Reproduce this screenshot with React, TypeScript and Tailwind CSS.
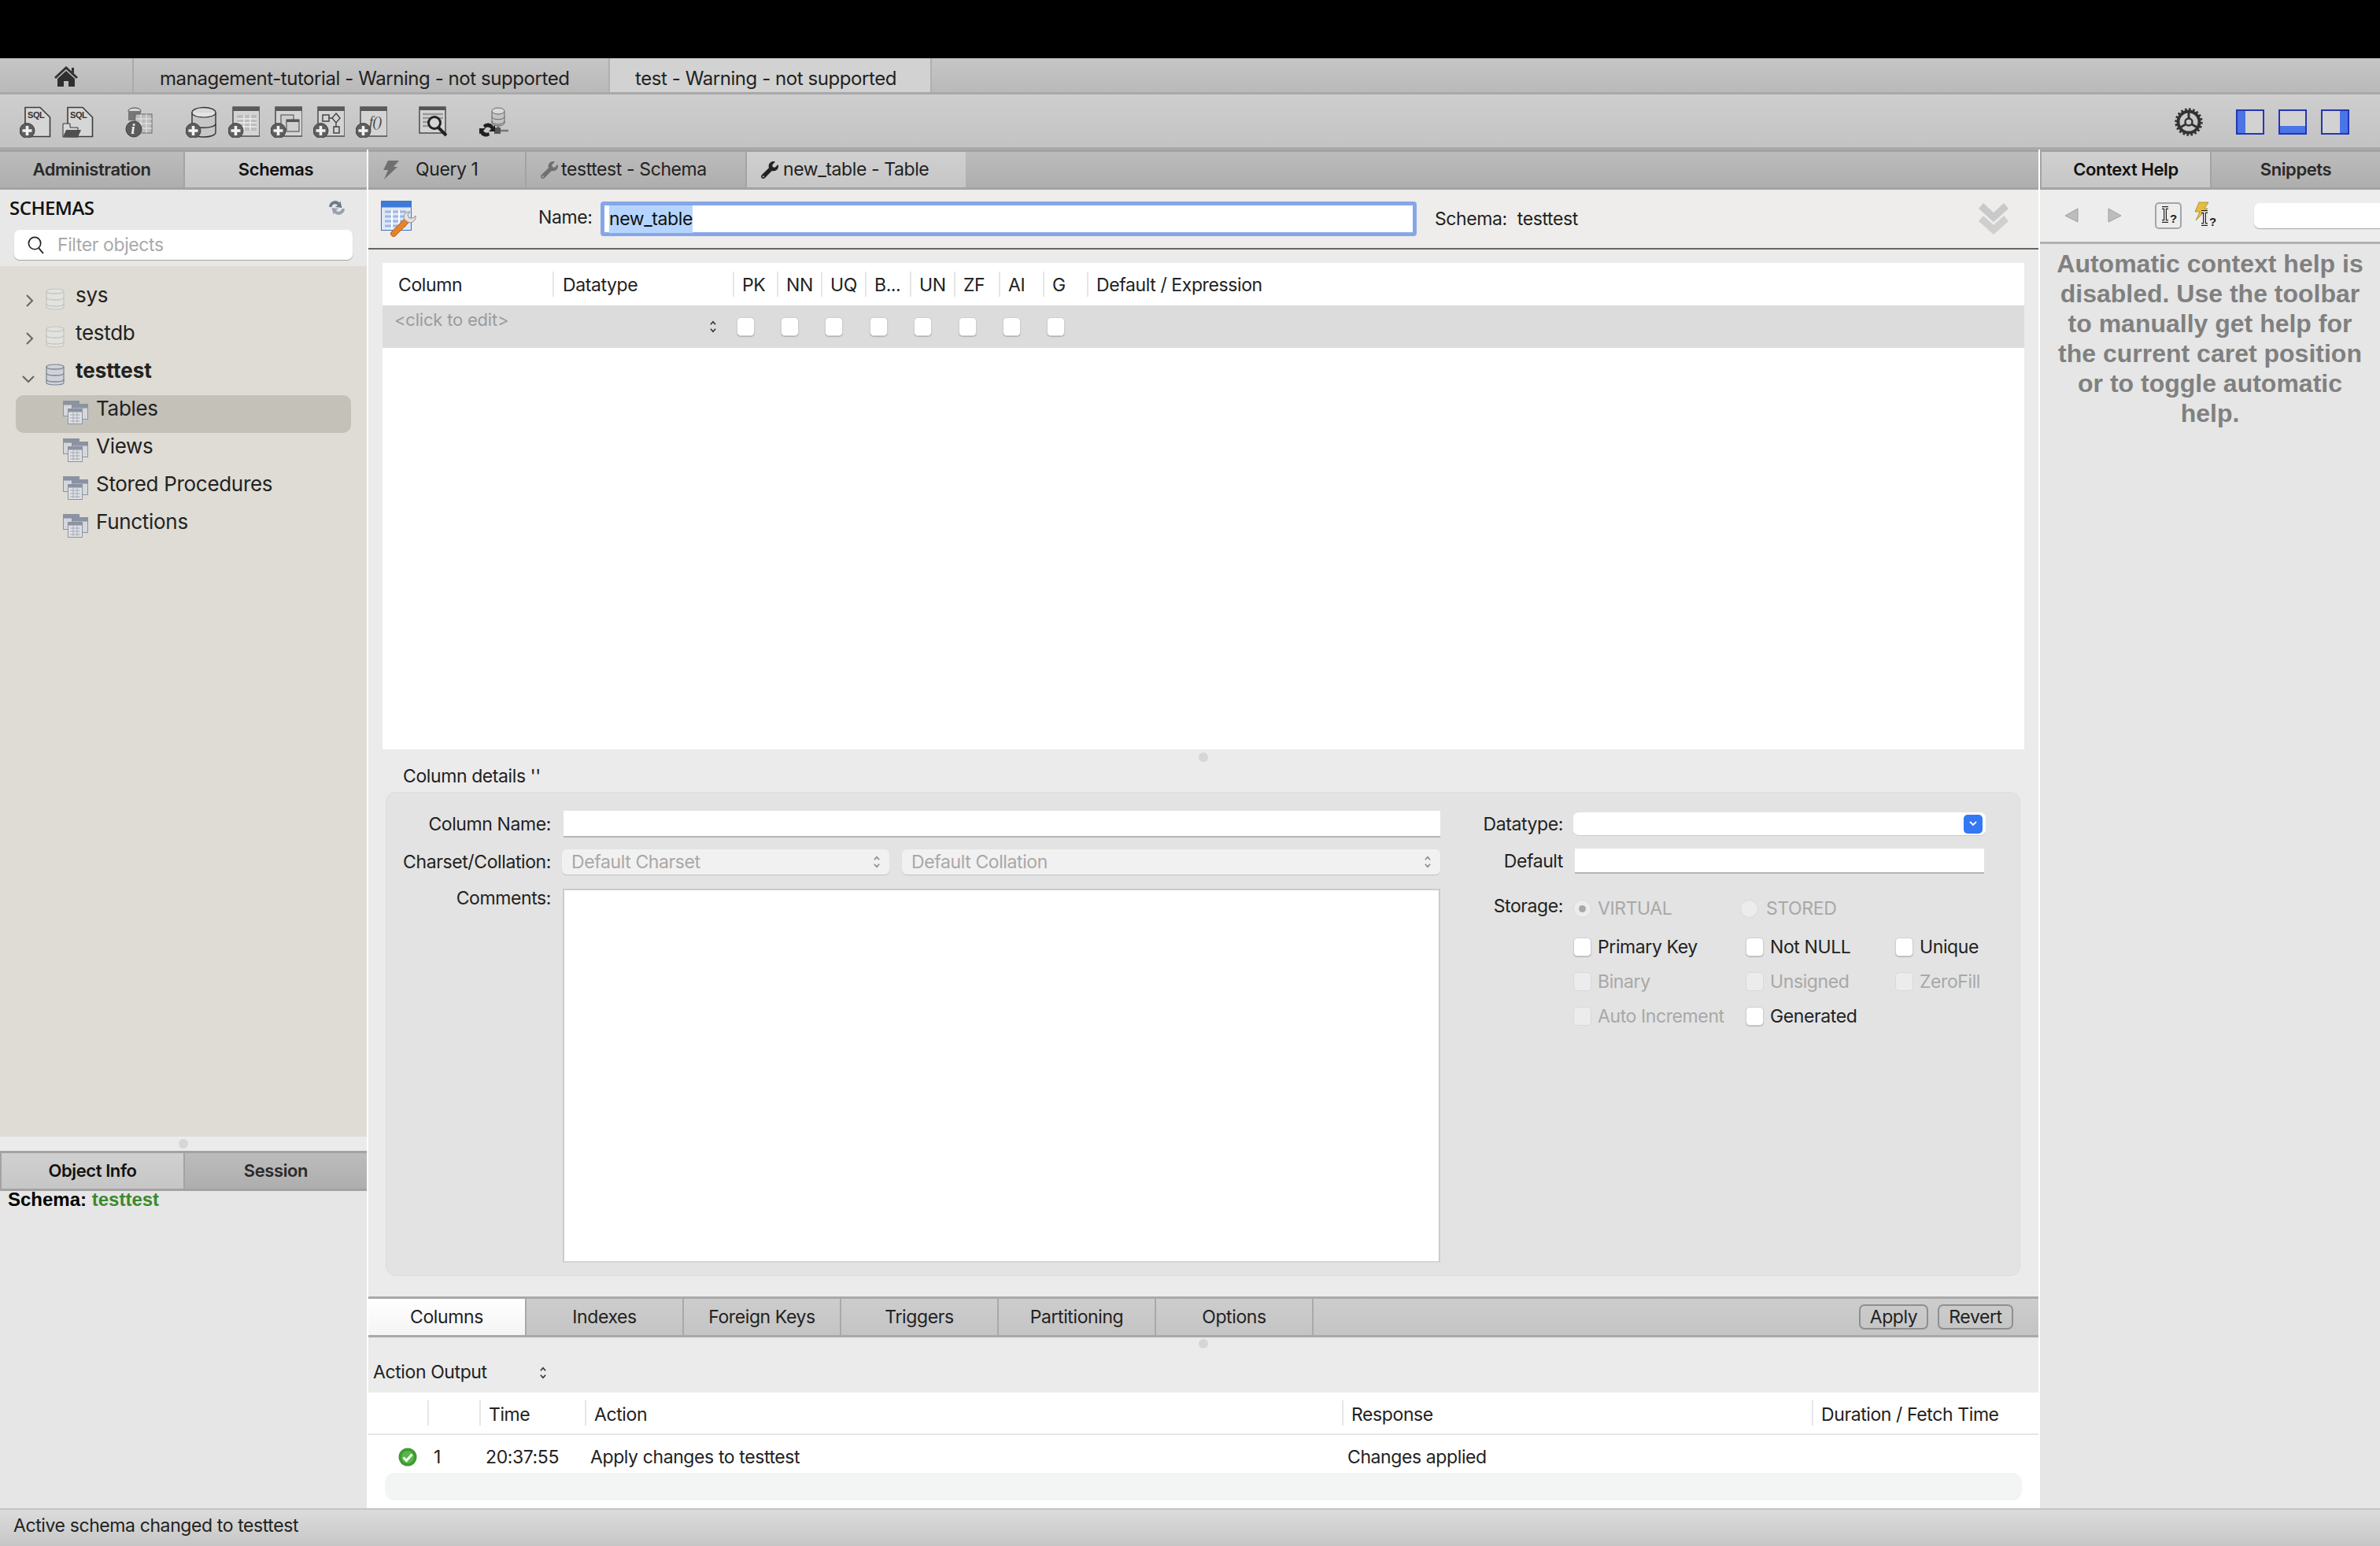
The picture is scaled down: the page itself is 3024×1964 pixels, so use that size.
import React from "react";
import { FaWrench } from "react-icons/fa";

const Badge = () => (
  <g>
    <circle cx="9.5" cy="31" r="9.5" fill="#5e5e5e" stroke="#3f3f3f" />
    <path d="M9.5 25v12M3.5 31h12" stroke="#f2f2f2" strokeWidth="3.6" />
  </g>
);
const Tool = ({ children, w = 40 }: { children: React.ReactNode; w?: number }) => (
  <svg viewBox={`0 0 ${w} 40`} width={w} height={40} className="shrink-0">{children}</svg>
);
const Doc = () => (
  <path d="M7 1.5H26L38.5 14V38.5H7Z" fill="#d6d6d6" stroke="#3d3d3d" strokeWidth="1.6" />
);
const WinFrame = () => (
  <g>
    <rect x="6" y="1" width="34" height="37" fill="#d4d4d4" stroke="#444" strokeWidth="1.4" />
    <rect x="6" y="1" width="34" height="5" fill="#5a5a5a" />
  </g>
);

const Home = () => (
  <svg viewBox="0 0 30 26" width={30} height={26}>
    <path d="M15 0 30 14l-2 2L15 4 2 16l-2-2L15 0Z" fill="#333" />
    <path d="M22 2h3v8l-3-3Z" fill="#333" />
    <path d="M15 6 26 16v10h-8v-7h-6v7H4V16Z" fill="#2f2f2f" />
  </svg>
);

const Bolt = ({ color }: { color: string }) => (
  <svg viewBox="0 0 22 24" width={22} height={24} className="shrink-0">
    <path d="M8 0H22L15 8H20L3 24 8 12H2Z" fill={color} />
  </svg>
);

const Updown = ({ c = "#333" }: { c?: string }) => (
  <svg viewBox="0 0 10 18" width={10} height={16} className="shrink-0">
    <path d="M1.5 6 5 2l3.5 4M1.5 12 5 16l3.5-4" fill="none" stroke={c} strokeWidth="1.8" />
  </svg>
);

const Db = ({ dark }: { dark?: boolean }) => {
  const f = dark ? "#cfd2da" : "#e2e2df";
  const s = dark ? "#7d8390" : "#c4c4c0";
  return (
    <svg viewBox="0 0 24 28" width={24} height={28} className="shrink-0">
      <path d="M1 4c0-4 22-4 22 0v20c0 4-22 4-22 0Z" fill={f} stroke={s} strokeWidth="1.2" />
      <path d="M1 4c0 4 22 4 22 0M1 12c0 4 22 4 22 0M1 20c0 4 22 4 22 0" fill="none" stroke={s} strokeWidth="1.4" />
    </svg>
  );
};

const Group = () => (
  <svg viewBox="0 0 32 30" width={32} height={30} className="shrink-0">
    <rect x="0.5" y="0.5" width="20" height="19" fill="#d5d7dc" stroke="#8b92a1" />
    <rect x="0.5" y="0.5" width="20" height="5" fill="#8b92a1" />
    <rect x="11.5" y="4.5" width="20" height="19" fill="#d5d7dc" stroke="#8b92a1" />
    <rect x="11.5" y="4.5" width="20" height="5" fill="#8b92a1" />
    <rect x="6.5" y="10.5" width="18" height="19" fill="#dfe1e5" stroke="#8b92a1" />
    <rect x="6.5" y="10.5" width="18" height="4" fill="#8b92a1" />
    <path d="M9 18h13M9 22h13M9 26h13M13 15v13M18 15v13" stroke="#a3a9b5" strokeWidth="1" />
  </svg>
);

const TableIcon = () => (
  <svg viewBox="0 0 46 46" width={46} height={46} className="shrink-0">
    <rect x="0.5" y="0.5" width="38" height="37" fill="#dfe8f8" stroke="#3f6fc0" />
    <rect x="0.5" y="0.5" width="38" height="8" fill="#3f7ad8" />
    <path d="M5 14h27M5 20h27M5 26h27M5 32h27" stroke="#9db8e6" strokeWidth="3" />
    <path d="M14 12v24M23 12v24" stroke="#fff" strokeWidth="2" />
    <path d="M13 40 31 22l5 5-18 18c-3 2-7-2-5-5Z" fill="#e5832a" stroke="#b55f12" />
    <path d="M30 24c-3-5 1-10 7-10l-3 4 2 4 5 0 3-3c1 6-5 11-10 8Z" fill="#e4e4e4" stroke="#8a8a8a" />
  </svg>
);

const Chk = ({ off }: { off?: boolean }) => (
  <span className={`block w-[23px] h-[24px] shrink-0 rounded-[5px] border ${off ? "bg-[#ececec] border-[#d9d9d9]" : "bg-white border-[#cfcfcf] shadow-[0_1px_1px_rgba(0,0,0,0.2)]"}`} />
);

const Opt = ({ label, off }: { label?: string; off?: boolean }) => (
  <div className="flex items-center h-[24px] gap-[8px]">
    <Chk off={off} />
    <span className={off ? "text-[#a8a8a8]" : "text-[#222]"}>{label}</span>
  </div>
);

const SideTab = ({ label, active, className = "" }: { label: string; active?: boolean; className?: string }) => (
  <div className={`flex items-center justify-center font-semibold text-[22px] border-b-[3px] border-t-[3px] border-[#a3a3a3] ${active ? "bg-gradient-to-b from-[#d0d0d0] to-[#c6c6c6] text-[#111]" : "bg-gradient-to-b from-[#bcbcbc] to-[#aeaeae] text-[#2a2a2a]"} ${className}`}>
    {label}
  </div>
);

const treeDb = [
  { n: "sys", open: false },
  { n: "testdb", open: false },
  { n: "testtest", open: true },
];
const treeKids = ["Tables", "Views", "Stored Procedures", "Functions"];

const colCells = [
  { t: "Column", w: "w-[216px]", cl: "pl-[20px]" },
  { t: "Datatype", w: "w-[229px]", cl: "pl-[11px]" },
  { t: "PK", w: "w-[56px]", cl: "pl-[10px]" },
  { t: "NN", w: "w-[56px]", cl: "pl-[10px]" },
  { t: "UQ", w: "w-[56px]", cl: "pl-[10px]" },
  { t: "B...", w: "w-[57px]", cl: "pl-[10px]" },
  { t: "UN", w: "w-[56px]", cl: "pl-[10px]" },
  { t: "ZF", w: "w-[57px]", cl: "pl-[10px]" },
  { t: "AI", w: "w-[56px]", cl: "pl-[10px]" },
  { t: "G", w: "w-[56px]", cl: "pl-[10px]" },
  { t: "Default / Expression", w: "flex-1", cl: "pl-[10px]" },
];

const Splitter = () => <span className="block w-[12px] h-[12px] rounded-full bg-[#d6d6d6]" />;

const Beam = ({ x, y, h }: { x: number; y: number; h: number }) => {
  const d = `M${x - 4} ${y}h8M${x} ${y}v${h}M${x - 4} ${y + h}h8`;
  return (
    <g fill="none">
      <path d={d} stroke="#222" strokeWidth="4" />
      <path d={d} stroke="#f4f4f4" strokeWidth="1.6" />
    </g>
  );
};

const HelpTools = () => (
  <>
    <svg viewBox="0 0 20 20" width={20} height={20} className="ml-[31px] shrink-0"><path d="M17 1v17L1 10Z" fill="#bdbdbd" stroke="#a0a0a0" /></svg>
    <svg viewBox="0 0 20 20" width={20} height={20} className="ml-[33px] shrink-0"><path d="M3 1v17l16-8Z" fill="#bdbdbd" stroke="#a0a0a0" /></svg>
    <div className="ml-[42px] w-[34px] h-[34px] shrink-0 rounded-[5px] border-2 border-[#a5a5a5] bg-[#ededed] flex items-center justify-center">
      <svg viewBox="0 0 26 28" width={26} height={28}>
        <Beam x={9} y={4} h={17} />
        <text x="15" y="23" fontSize="15" fontWeight="700" fill="#222" fontFamily="Liberation Sans, sans-serif">?</text>
      </svg>
    </div>
    <svg viewBox="0 0 34 36" width={34} height={36} className="ml-[14px] shrink-0">
      <path d="M8 1h12l-5 8h4L4 24l5-11H3Z" fill="#e6bd3e" stroke="#a5862a" strokeWidth="0.8" />
      <Beam x={15} y={13} h={16} />
      <text x="21" y="31" fontSize="15" fontWeight="700" fill="#222" fontFamily="Liberation Sans, sans-serif">?</text>
    </svg>
  </>
);

const Gear = () => (
  <svg viewBox="0 0 36 36" width={36} height={36} className="shrink-0">
    <circle cx="18" cy="18" r="13.5" fill="none" stroke="#333" strokeWidth="4" />
    <circle cx="18" cy="18" r="16" fill="none" stroke="#333" strokeWidth="3.5" strokeDasharray="2.5 2.5" />
    <circle cx="18" cy="18" r="4.5" fill="none" stroke="#333" strokeWidth="2.4" />
    <path d="M18 5v8M7 25l7-4M29 25l-7-4" stroke="#333" strokeWidth="3" />
  </svg>
);

const Layout = ({ k }: { k: "l" | "b" | "r" }) => (
  <svg viewBox="0 0 36 33" width={36} height={33} className="shrink-0">
    <rect x="1" y="1" width="34" height="30" fill="#d2d2d2" stroke="#2436b4" strokeWidth="2" />
    {k === "l" && <rect x="1" y="1" width="11" height="30" fill="#4a74e8" />}
    {k === "b" && <rect x="1" y="21" width="34" height="10" fill="#4a74e8" />}
    {k === "r" && <rect x="24" y="1" width="11" height="30" fill="#4a74e8" />}
    <rect x="1" y="1" width="34" height="30" fill="none" stroke="#2436b4" strokeWidth="2" />
  </svg>
);

export default function App() {
  return (
    <div className="w-[3024px] h-[1964px] overflow-hidden flex flex-col bg-[#ebebeb] text-[#222] text-[23px] font-['Inter',sans-serif] tracking-[-0.4px]">
      <div className="h-[74px] bg-black shrink-0" />

      {/* connection tabs */}
      <div className="h-[46px] shrink-0 flex bg-gradient-to-b from-[#c6c6c6] to-[#b9b9b9] border-b-[3px] border-[#a9a9a9] text-[24px] tracking-[-0.43px]">
        <div className="w-[170px] flex items-center justify-center border-r-2 border-[#aaa] pt-[2px]"><Home /></div>
        <div className="w-[603px] flex items-center pl-[33px] pt-[8px]">management-tutorial - Warning - not supported</div>
        <div className="w-[411px] flex items-center pl-[32px] pt-[8px] bg-[#d2d2d2] border-x-2 border-[#b0b0b0]">test - Warning - not supported</div>
      </div>

      {/* toolbar */}
      <div className="h-[70px] shrink-0 flex items-center bg-gradient-to-b from-[#cecece] to-[#c3c3c3] border-b-[3px] border-[#a9a9a9] pl-[25px] pt-[3px]">
        <Tool><Doc /><text x="10" y="15" fontSize="11" fontWeight="700" fill="#333" fontFamily="Liberation Sans, sans-serif">SQL</text><Badge /></Tool>
        <div className="ml-[14px]"><Tool><Doc /><text x="10" y="15" fontSize="11" fontWeight="700" fill="#333" fontFamily="Liberation Sans, sans-serif">SQL</text><path d="M1 22h9v5h10v12H1Z" fill="#d8d8d8" stroke="#333" /><path d="M1 39l4-9h19l-4 9Z" fill="#4f4f4f" /></Tool></div>
        <div className="ml-[39px]"><Tool w={36}><ellipse cx="13" cy="6" rx="8" ry="4" fill="#d9d9d9" stroke="#444" /><path d="M5 6v12h16V6" fill="#777" /><rect x="14" y="10" width="21" height="24" fill="#bdbdbd" stroke="#666" /><path d="M14 16h21M14 22h21M14 28h21M21 10v24M28 10v24" stroke="#e8e8e8" /><ellipse cx="12" cy="29" rx="10" ry="10" fill="#5c5c5c" stroke="#3f3f3f" /><text x="8.5" y="35" fontSize="18" fontWeight="700" fontStyle="italic" fill="#f4f4f4" fontFamily="Liberation Serif, serif">i</text></Tool></div>
        <div className="ml-[42px]"><Tool><ellipse cx="23" cy="8" rx="15" ry="6.5" fill="#d8d8d8" stroke="#333" strokeWidth="1.4" /><path d="M8 8v25c0 8 30 8 30 0V8" fill="#c6c6c6" stroke="#333" strokeWidth="1.4" /><path d="M8 8c0 8 30 8 30 0" fill="#e3e3e3" stroke="#333" strokeWidth="1.2" /><path d="M8 22c0 7 30 7 30 0" fill="none" stroke="#333" strokeWidth="1.4" /><Badge /></Tool></div>
        <div className="ml-[14px]"><Tool><WinFrame /><path d="M11 11h25v20H11Z" fill="#bdbdbd" /><path d="M11 16h25M11 21h25M11 26h25" stroke="#eee" strokeWidth="1.4" /><path d="M20 11v20M28 11v20" stroke="#eee" strokeWidth="1.4" /><Badge /></Tool></div>
        <div className="ml-[14px]"><Tool><WinFrame /><rect x="13" y="11" width="16" height="18" fill="#cfcfcf" stroke="#444" /><rect x="20" y="17" width="16" height="15" fill="#cfcfcf" stroke="#444" /><rect x="20" y="17" width="16" height="3" fill="#555" /><Badge /></Tool></div>
        <div className="ml-[14px]"><Tool><WinFrame /><rect x="12" y="11" width="8" height="8" fill="none" stroke="#444" strokeWidth="1.5" /><path d="M29 9l5 6-5 6-5-6ZM20 15h4M29 21v6" fill="none" stroke="#444" strokeWidth="1.4" /><rect x="26" y="26" width="7" height="8" fill="none" stroke="#444" strokeWidth="1.5" /><Badge /></Tool></div>
        <div className="ml-[14px]"><Tool><WinFrame /><text x="17" y="26" fontSize="18" fill="#444" fontFamily="Liberation Serif, serif" fontStyle="italic">f()</text><Badge /></Tool></div>
        <div className="ml-[40px]"><Tool w={36}><rect x="1" y="1" width="33" height="33" fill="#d4d4d4" stroke="#444" strokeWidth="1.4" /><rect x="1" y="1" width="33" height="4" fill="#555" /><path d="M5 10h26M5 15h26M5 20h10M5 25h8" stroke="#999" strokeWidth="2.4" /><circle cx="20" cy="21" r="7.5" fill="#d4d4d4" stroke="#222" strokeWidth="3" /><path d="M25 27l10 10" stroke="#222" strokeWidth="4" /></Tool></div>
        <div className="ml-[41px]"><Tool w={37}><path d="M16 7v14c0 5 16 5 16 0V7Z" fill="#c4c4c4" stroke="#666" /><ellipse cx="24" cy="6" rx="8" ry="4" fill="#dadada" stroke="#666" /><path d="M16 13c0 5 16 5 16 0M16 19c0 5 16 5 16 0" fill="none" stroke="#666" /><path d="M24 25v6M24 31h13" stroke="#777" strokeWidth="2.5" /><rect x="19" y="27" width="8" height="8" fill="#555" /><path d="M5 24a8 8 0 0 1 13 2l2-2v8h-8l3-3a5 5 0 0 0-8-1ZM13 37a8 8 0 0 1-12-3l-1 2v-8h8l-3 3a5 5 0 0 0 7 2Z" fill="#1f1f1f" /></Tool></div>
        <div className="ml-auto flex items-center pr-[39px]">
          <Gear />
          <div className="ml-[42px]"><Layout k="l" /></div>
          <div className="ml-[18px]"><Layout k="b" /></div>
          <div className="ml-[18px]"><Layout k="r" /></div>
        </div>
      </div>

      <div className="flex-1 flex min-h-0">
        {/* left sidebar */}
        <div className="w-[466px] shrink-0 flex flex-col">
          <div className="h-[51px] shrink-0 grid grid-cols-2">
            <SideTab label="Administration" />
            <SideTab label="Schemas" active className="border-l-2" />
          </div>
          <div className="h-[97px] shrink-0 bg-[#e8e8e8] px-[18px] flex flex-col">
            <div className="h-[51px] flex items-center justify-between -ml-[6px] pr-[8px] pb-[6px]">
              <span className="font-semibold text-[24px] text-[#111] tracking-[-0.5px] font-['Open_Sans',sans-serif]">SCHEMAS</span>
              <svg viewBox="0 0 22 18" width={24} height={20}><path d="M2 8a7 7 0 0 1 12-5l1-2 2 8-8-1 3-2a4 4 0 0 0-7 2Z" fill="#6f7a88" /><path d="M20 10a7 7 0 0 1-12 5l-1 2-2-8 8 1-3 2a4 4 0 0 0 7-2Z" fill="#98a2ad" /></svg>
            </div>
            <div className="h-[38px] rounded-[7px] bg-white shadow-[0_1px_1px_rgba(0,0,0,0.3)] flex items-center pl-[17px] gap-[17px] text-[#a9a9a9]">
              <svg viewBox="0 0 22 24" width={21} height={23} className="shrink-0"><circle cx="9.5" cy="9.5" r="8" fill="none" stroke="#222" strokeWidth="1.8" /><path d="M15 16l6 7" stroke="#222" strokeWidth="2" /></svg>
              <span>Filter objects</span>
            </div>
          </div>
          <div className="h-[1106px] shrink-0 bg-[#dedcd4] pt-[20px] text-[26px] text-[#222] px-[20px] tracking-[-0.3px]">
            {treeDb.map((d) => (
              <div key={d.n} className="h-[48px] flex items-center">
                <span className="w-[38px] pl-[8px] flex items-center shrink-0 h-[28px]">
                  {d.open ? (
                    <svg viewBox="0 0 16 10" width={16} height={10} className="mt-[8px]"><path d="M1 1l7 7 7-7" fill="none" stroke="#666" strokeWidth="2" /></svg>
                  ) : (
                    <svg viewBox="0 0 10 16" width={10} height={16} className="ml-[5px]"><path d="M1 1l7 7-7 7" fill="none" stroke="#666" strokeWidth="2" /></svg>
                  )}
                </span>
                <span className="-mt-[4px]"><Db dark={d.open} /></span>
                <span className={`ml-[14px] mb-[15px] ${d.open ? "font-bold tracking-normal" : ""}`}>{d.n}</span>
              </div>
            ))}
            {treeKids.map((k, i) => (
              <div key={k} className={`h-[48px] flex items-center pl-[60px] rounded-[10px] ${i === 0 ? "bg-[#c4c1b9]" : ""}`}>
                <span className="-mt-[4px]"><Group /></span>
                <span className="ml-[10px] mb-[15px]">{k}</span>
              </div>
            ))}
          </div>
          <div className="h-[18px] shrink-0 flex items-center justify-center"><Splitter /></div>
          <div className="h-[51px] shrink-0 grid grid-cols-2">
            <SideTab label="Object Info" active className="border-l-2" />
            <SideTab label="Session" className="border-l-2" />
          </div>
          <div className="flex-1 min-h-0 bg-[#e6e6e6] pl-[10px] text-[24px] leading-[22px] font-bold font-['Liberation_Sans',sans-serif] tracking-normal text-black">
            Schema: <span className="text-[#3b8a2b]">testtest</span>
          </div>
        </div>

        <div className="w-[2px] bg-white shrink-0" />

        {/* center */}
        <div className="w-[2122px] shrink-0 flex flex-col">
          <div className="h-[51px] shrink-0 flex bg-gradient-to-b from-[#bcbcbc] to-[#aeaeae] border-y-[3px] border-[#a3a3a3]">
            <div className="w-[201px] flex items-center pl-[17px] gap-[21px] border-r-2 border-[#a3a3a3]"><Bolt color="#707070" /><span>Query 1</span></div>
            <div className="w-[280px] flex items-center pl-[18px] gap-[4px] border-r-2 border-[#a3a3a3]"><FaWrench size={22} color="#707070" /><span>testtest - Schema</span></div>
            <div className="w-[278px] flex items-center pl-[18px] gap-[6px] bg-gradient-to-b from-[#d0d0d0] to-[#c6c6c6]"><FaWrench size={22} color="#222" /><span>new_table - Table</span></div>
          </div>
          <div className="h-[76px] shrink-0 bg-[#eeedeb] border-b-2 border-[#666] flex items-center pl-[16px]">
            <TableIcon />
            <span className="ml-[154px] w-[66px] pb-[3px]">Name:</span>
            <div className="ml-[13px] w-[1037px] h-[44px] rounded-[4px] bg-white border-[5px] border-[#87a6e8] flex items-center pl-[6px] text-[#111]">
              <span className="bg-[#b5d5ff] mt-[1px]">new_table</span>
            </div>
            <span className="ml-[23px]">Schema:</span>
            <span className="ml-[13px]">testtest</span>
            <svg viewBox="0 0 38 40" width={38} height={40} className="ml-auto mr-[38px]"><path d="M0 7 6 0 19 12 32 0 38 7 19 24Z" fill="#c9c9c9" /><path d="M0 23 6 16 19 28 32 16 38 23 19 40Z" fill="#cfcfcf" /></svg>
          </div>

          {/* columns table */}
          <div className="mt-[17px] ml-[18px] w-[2086px] h-[618px] shrink-0 bg-white flex flex-col">
            <div className="h-[54px] flex items-center shrink-0">
              {colCells.map((c, i) => (
                <div key={c.t} className={`${c.w} h-[32px] flex items-center pt-[2px] ${c.cl} ${i ? "border-l-2 border-[#e6e6e6]" : ""}`}>{c.t}</div>
              ))}
            </div>
            <div className="h-[54px] shrink-0 bg-[#dcdcdc] flex items-center">
              <span className="w-[415px] pl-[15px] mb-[17px] text-[22px] text-[#9b9b9b] tracking-[-0.2px]">&lt;click to edit&gt;</span>
              <Updown />
              {colCells.slice(2, 10).map((c, i) => (
                <span key={c.t} className={i === 0 ? "ml-[25px]" : i === 3 || i === 5 ? "ml-[34px]" : "ml-[33px]"}><Chk /></span>
              ))}
            </div>
          </div>
          <div className="h-[20px] ml-[18px] w-[2086px] shrink-0 flex items-center justify-center"><Splitter /></div>
          <div className="ml-[44px] h-[34px] shrink-0 flex items-center pb-[6px]">Column details ''</div>

          {/* detail panel */}
          <div className="ml-[22px] w-[2077px] h-[615px] shrink-0 rounded-[12px] bg-[#e3e3e3] border border-[#dddddd] flex">
            <div className="w-[1339px] shrink-0 flex flex-col pt-[23px]">
              <div className="flex items-center h-[34px]">
                <span className="w-[209px] text-right">Column Name:</span>
                <div className="ml-[16px] flex-1 h-[34px] bg-white border-b-2 border-[#b5b5b5]" />
              </div>
              <div className="flex items-center h-[32px] mt-[15px]">
                <span className="w-[209px] text-right">Charset/Collation:</span>
                <div className="ml-[14px] w-[416px] h-[32px] rounded-[6px] bg-[#f1f1f1] shadow-[0_1px_1px_rgba(0,0,0,0.15)] flex items-center justify-between pl-[12px] pr-[11px] text-[#a8a8a8]"><span>Default Charset</span><Updown c="#888" /></div>
                <div className="ml-[16px] flex-1 h-[32px] rounded-[6px] bg-[#f1f1f1] shadow-[0_1px_1px_rgba(0,0,0,0.15)] flex items-center justify-between pl-[12px] pr-[11px] text-[#a8a8a8]"><span>Default Collation</span><Updown c="#888" /></div>
              </div>
              <div className="flex mt-[18px]">
                <span className="w-[209px] text-right -mt-[5px]">Comments:</span>
                <div className="ml-[15px] flex-1 h-[475px] bg-white border-2 border-[#cbcbcb] border-b-[#d6d6d6]" />
              </div>
            </div>
            <div className="flex flex-col pt-[25px]">
              <div className="flex items-center h-[30px]">
                <span className="w-[156px] text-right">Datatype:</span>
                <div className="ml-[13px] w-[524px] h-[30px] rounded-[7px] bg-white border-b border-[#c9c9c9] flex items-center justify-end pr-[4px]">
                  <span className="w-[24px] h-[24px] rounded-[5px] bg-[#3478f6] flex items-center justify-center">
                    <svg viewBox="0 0 10 7" width={10} height={7}><path d="M1 1l4 4 4-4" fill="none" stroke="#fff" strokeWidth="1.8" /></svg>
                  </span>
                </div>
              </div>
              <div className="flex items-center h-[32px] mt-[16px]">
                <span className="w-[156px] text-right">Default</span>
                <div className="ml-[15px] w-[520px] h-[32px] bg-white border-b-2 border-[#b5b5b5]" />
              </div>
              <div className="flex h-[23px] mt-[33px]">
                <span className="w-[156px] text-right -mt-[9px]">Storage:</span>
                <div className="ml-[13px] flex items-center">
                  <span className="w-[23px] h-[23px] rounded-full bg-[#ececec] border border-[#d9d9d9] flex items-center justify-center"><span className="block w-[9px] h-[9px] rounded-full bg-[#a8a8a8]" /></span>
                  <span className="ml-[8px] w-[181px] text-[#a8a8a8]">VIRTUAL</span>
                  <span className="w-[23px] h-[23px] rounded-full bg-[#ececec] border border-[#d9d9d9]" />
                  <span className="ml-[10px] text-[#a8a8a8]">STORED</span>
                </div>
              </div>
              <div className="ml-[169px] mt-[25px] grid grid-cols-[219px_190px_auto] gap-y-[20px] w-fit">
                <Opt label="Primary Key" />
                <Opt label="Not NULL" />
                <Opt label="Unique" />
                <Opt label="Binary" off />
                <Opt label="Unsigned" off />
                <Opt label="ZeroFill" off />
                <Opt label="Auto Increment" off />
                <Opt label="Generated" />
              </div>
            </div>
          </div>

          <div className="h-[26px] shrink-0" />

          {/* editor tabs */}
          <div className="h-[52px] shrink-0 flex bg-gradient-to-b from-[#cdcdcd] to-[#c4c4c4] border-y-[3px] border-[#a9a9a9]">
            <div className="w-[201px] flex items-center justify-center bg-gradient-to-b from-white to-[#f4f4f4] border-r-2 border-[#a9a9a9]">Columns</div>
            {["Indexes", "Foreign Keys", "Triggers", "Partitioning", "Options"].map((t) => (
              <div key={t} className="w-[200px] flex items-center justify-center border-r-2 border-[#a9a9a9]">{t}</div>
            ))}
            <div className="ml-auto flex items-center gap-[12px] pr-[32px]">
              <span className="w-[88px] h-[32px] rounded-[7px] border-2 border-[#8f8f8f] flex items-center justify-center">Apply</span>
              <span className="w-[96px] h-[32px] rounded-[7px] border-2 border-[#8f8f8f] flex items-center justify-center">Revert</span>
            </div>
          </div>

          {/* output */}
          <div className="h-[70px] shrink-0 flex flex-col">
            <div className="h-[15px] flex items-center justify-center"><Splitter /></div>
            <div className="flex-1 flex items-center pl-[6px] pt-[4px]">
              <span className="w-[211px]">Action Output</span>
              <Updown />
            </div>
          </div>
          <div className="flex-1 min-h-0 bg-white flex flex-col">
            <div className="h-[54px] shrink-0 border-b-2 border-[#e6e6e6] flex items-center">
              <div className="w-[75px]" />
              <div className="w-[66px] h-[32px] border-l-2 border-[#e6e6e6]" />
              <div className="w-[134px] h-[32px] border-l-2 border-[#e6e6e6] flex items-center pl-[10px] pt-[5px]">Time</div>
              <div className="w-[962px] h-[32px] border-l-2 border-[#e6e6e6] flex items-center pl-[10px] pt-[5px]">Action</div>
              <div className="w-[597px] h-[32px] border-l-2 border-[#e6e6e6] flex items-center pl-[10px] pt-[5px]">Response</div>
              <div className="flex-1 h-[32px] border-l-2 border-[#e6e6e6] flex items-center pl-[10px] pt-[5px]">Duration / Fetch Time</div>
            </div>
            <div className="h-[48px] shrink-0 flex items-center pt-[8px]">
              <svg viewBox="0 0 24 24" width={24} height={24} className="ml-[38px] shrink-0"><circle cx="12" cy="12" r="11.5" fill="#3f9a32" /><circle cx="12" cy="12" r="8" fill="#58b74a" /><path d="M6.5 12.5l4 4 7-8" fill="none" stroke="#fff" strokeWidth="3" /></svg>
              <span className="ml-[21px] w-[66px]">1</span>
              <span className="w-[133px]">20:37:55</span>
              <span className="w-[962px]">Apply changes to testtest</span>
              <span>Changes applied</span>
            </div>
            <div className="ml-[21px] w-[2080px] h-[35px] shrink-0 rounded-[12px] bg-[#f3f5f4]" />
          </div>
        </div>

        <div className="w-[2px] bg-white shrink-0" />

        {/* right */}
        <div className="flex-1 min-w-0 flex flex-col bg-[#e6e6e6]">
          <div className="h-[51px] shrink-0 grid grid-cols-2">
            <SideTab label="Context Help" active className="border-l-2" />
            <SideTab label="Snippets" className="border-l-2" />
          </div>
          <div className="h-[69px] shrink-0 bg-[#ededed] border-b-[3px] border-[#b0b0b0] flex items-center overflow-hidden">
            <HelpTools />
            <div className="ml-[44px] w-[200px] shrink-0 h-[32px] rounded-[7px] bg-white shadow-[0_1px_1px_rgba(0,0,0,0.3)]" />
          </div>
          <div className="pt-[6px] px-[16px] text-center font-['Liberation_Sans',sans-serif] font-bold text-[32px] leading-[38px] tracking-normal text-[#808080]">
            Automatic context help is disabled. Use the toolbar to manually get help for the current caret position or to toggle automatic help.
          </div>
        </div>
      </div>

      {/* status */}
      <div className="h-[48px] shrink-0 bg-gradient-to-b from-[#dcdcdc] to-[#c6c6c6] border-t-2 border-[#c4c4c4] flex items-center pl-[17px] pb-[6px]">
        Active schema changed to testtest
      </div>
    </div>
  );
}
